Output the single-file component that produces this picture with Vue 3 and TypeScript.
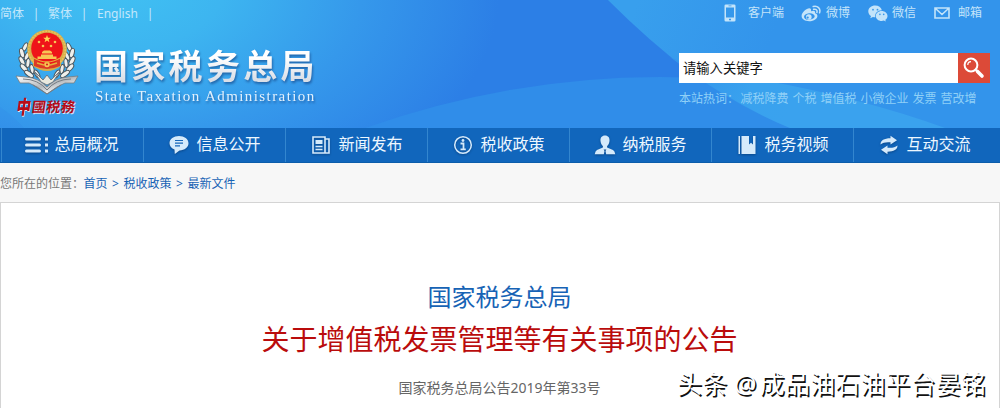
<script setup lang="ts">
interface NavItem { label: string; icon: string }

const languages: string[] = ['简体', '繁体', 'English']
const hotWords: string[] = ['减税降费', '个税', '增值税', '小微企业', '发票', '营改增']
const navItems: NavItem[] = [
  { label: '总局概况', icon: 'list' },
  { label: '信息公开', icon: 'chat' },
  { label: '新闻发布', icon: 'news' },
  { label: '税收政策', icon: 'info' },
  { label: '纳税服务', icon: 'user' },
  { label: '税务视频', icon: 'book' },
  { label: '互动交流', icon: 'swap' },
]
const crumbs: string[] = ['首页', '税收政策', '最新文件']
</script>

<template>
  <div class="page">
    <header class="header">
      <svg class="backdrop" width="1000" height="128" viewBox="0 0 1000 128" preserveAspectRatio="none">
        <defs>
          <radialGradient id="sky" gradientUnits="userSpaceOnUse" cx="0" cy="0" r="1" gradientTransform="translate(110 -25) rotate(4) scale(390 245)">
            <stop offset="0" stop-color="#41c3f3" />
            <stop offset="0.3" stop-color="#3db5f0" />
            <stop offset="0.65" stop-color="#3598eb" />
            <stop offset="1" stop-color="#2c7fe6" />
          </radialGradient>
          <linearGradient id="topRight" gradientUnits="userSpaceOnUse" x1="630" y1="20" x2="760" y2="70">
            <stop offset="0" stop-color="#389fed" />
            <stop offset="1" stop-color="#3394eb" />
          </linearGradient>
          <linearGradient id="band" gradientUnits="userSpaceOnUse" x1="690" y1="60" x2="790" y2="110">
            <stop offset="0" stop-color="#3394eb" />
            <stop offset="0.6" stop-color="#39a2ee" />
            <stop offset="1" stop-color="#3aa2ee" />
          </linearGradient>
        </defs>
        <rect width="1000" height="128" fill="url(#sky)" />
        <path d="M0 107Q12 115 24 128H0Z" fill="#2c7fe6" fill-opacity="0.15" />
        <path d="M365 128Q510 77 660 77Q810 77 960 128Z" fill="#308de9" />
        <path d="M608 0Q650 42 690 72Q740 108 790 128H1000V0Z" fill="url(#topRight)" />
        <path d="M670 57Q730 103 790 128H945Q840 90 700 70Z" fill="url(#band)" />
      </svg>

      <div class="brand-side">
        <div class="languages">
          <template v-for="lang in languages" :key="lang"><a>{{ lang }}</a><i>|</i></template>
        </div>
        <div class="brand">
          <div class="emblem">
            <svg width="64" height="66" viewBox="0 0 64 66">
              <defs>
                <linearGradient id="silver" x1="0" x2="1" y1="0" y2="1">
                  <stop offset="0" stop-color="#fff" />
                  <stop offset="0.5" stop-color="#b5b9bd" />
                  <stop offset="0.75" stop-color="#f2f3f3" />
                  <stop offset="1" stop-color="#777d84" />
                </linearGradient>
              </defs>
              <g fill="#eff0ec" stroke="#4d565c" stroke-width="1">
                <g v-for="side in [1, -1]" :key="side" :transform="side === 1 ? undefined : 'translate(64 0) scale(-1 1)'">
                  <ellipse cx="10" cy="18" rx="2" ry="4.5" transform="rotate(25 10 18)" />
                  <ellipse cx="7" cy="24" rx="2.200" ry="4.800" transform="rotate(-15 7 24)" />
                  <ellipse cx="12" cy="27" rx="2" ry="4.500" transform="rotate(25 12 27)" />
                  <ellipse cx="7" cy="32" rx="2.200" ry="4.800" transform="rotate(-28 7 32)" />
                  <ellipse cx="13" cy="34" rx="2" ry="4.500" transform="rotate(8 13 34)" />
                  <ellipse cx="9" cy="39" rx="2.200" ry="5" transform="rotate(-42 9 39)" />
                  <ellipse cx="17" cy="40" rx="2" ry="4.500" transform="rotate(-12 17 40)" />
                  <ellipse cx="14" cy="45" rx="2.200" ry="5.200" transform="rotate(-55 14 45)" />
                  <ellipse cx="22" cy="45" rx="2" ry="4.500" transform="rotate(-30 22 45)" />
                </g>
              </g>
              <path d="M1 47L11 48Q24 49 32 58Q40 49 53 48L63 47L59 54L50 54Q42 57 32 65Q22 57 14 54L5 54Z" fill="url(#silver)" stroke="#777b7f" stroke-width="0.8" />
              <path d="M8 50Q23 50 32 61Q41 50 56 50M18 56L32 65L46 56" fill="none" stroke="#777d83" stroke-width="1" />
              <path d="M19 42L28 51L32 46L36 51L45 42L38 53L32 56L26 53Z" fill="#e9e9df" stroke="#67717a" stroke-width="0.9" />
              <path d="M18 30H46V37Q39 42 32 42Q25 42 18 37Z" fill="#d9ab45" />
              <circle cx="32" cy="20.500" r="19.800" fill="#d9b04b" />
              <circle cx="32" cy="20.500" r="18.300" fill="none" stroke="#e8c562" stroke-width="1.400" stroke-dasharray="1.7 1.3" />
              <path d="M19 28H45V37Q38 40 32 40Q26 40 19 37Z" fill="#dc3a25" />
              <circle cx="32" cy="19.500" r="15.800" fill="#ef1419" />
              <path d="M32 6l1 2.7 2.8.1-2.2 1.7.8 2.7-2.4-1.6-2.4 1.6.8-2.700-2.200-1.700 2.800-.1Z" fill="#ffd955" />
              <g fill="#f8c654">
                <circle cx="24" cy="13" r="1.300" /><circle cx="40" cy="13" r="1.300" />
                <circle cx="28" cy="17" r="1.300" /><circle cx="36" cy="17" r="1.300" />
                <path d="M27 23l2-1.400h6l2 1.400v1.500H27ZM26 25.500h12v2h3.500v2.500H22.500v-2.500H26Z" />
                <circle cx="32" cy="35.500" r="2.800" />
              </g>
              <path d="M19 29Q32 37 45 29M22 34L29 36M42 34L35 36" fill="none" stroke="#e4b03c" stroke-width="1.400" />
              <circle cx="32" cy="35.500" r="1.100" fill="#d92720" />
            </svg>
            <div class="script-name"><b>中</b><span>國</span><span>税</span><span>務</span></div>
          </div>
          <div class="names">
            <div class="name-cn">国家税务总局</div>
            <div class="name-en">State Taxation Administration</div>
          </div>
        </div>
      </div>

      <div class="tools">
        <div class="services">
          <a class="client">
            <svg width="12" height="18" viewBox="0 0 12 18"><path fill-rule="evenodd" d="M1.8.5h8.4q1.3 0 1.3 1.3v14.4q0 1.3-1.3 1.3H1.8Q.5 17.500.5 16.200V1.800Q.5.5 1.800.5ZM2 3.500v10h8v-10ZM4.500 1.500v.8h3v-.8ZM5 14.800v1.500h2v-1.500Z" fill="#c3e4fa" /></svg>
            客户端
          </a>
          <a class="weibo">
            <svg width="20" height="17" viewBox="0 0 20 17">
              <path fill-rule="evenodd" d="M8.300 3.300C5.500 3.300.6 7.400.6 11c0 3.200 3.600 5.200 7.600 5.200 5 0 8.200-2.800 8.200-5.300 0-1.700-1.400-2.400-2.400-2.700.8-2.500-1.300-3.200-4-1.900.4-1.600 0-3-1.700-3ZM8 8.200c3.200-.3 5.700 1.100 5.700 3.100 0 1.800-2.400 3.300-5.300 3.500-3 .2-5.400-1.100-5.400-3.100 0-1.700 2.200-3.300 5-3.500Z" fill="#c3e4fa" />
              <path fill-rule="evenodd" d="M7.800 9.200a2.800 2.800 0 1 0 .1 5.600 2.800 2.800 0 0 0-.1-5.600ZM6.700 11.500a1.100 1.100 0 1 1 0 2.200 1.100 1.100 0 0 1 0-2.200Z" fill="#c3e4fa" />
              <path d="M12.200 1.500c4.300-1.300 7.800 2.200 6.400 6.300M12.600 4.300c2.300-.6 4 .9 3.300 3.100" fill="none" stroke="#c3e4fa" stroke-width="1.500" stroke-linecap="round" />
            </svg>
            微博
          </a>
          <a class="wechat">
            <svg width="20" height="17" viewBox="0 0 20 17">
              <path d="M7.200.5C3.300.5.300 3.100.300 6.400c0 1.900 1 3.500 2.700 4.600l-.7 2.200 2.600-1.300c.9.200 1.600.3 2.400.3-.8-3.900 2.400-7 6.600-6.900C13.200 2.500 10.500.5 7.200.5Z" fill="#c3e4fa" />
              <path d="M13.700 5.900c3.200 0 5.800 2.200 5.800 5 0 1.600-.9 3-2.200 3.900l.5 1.800-2-1c-.7.200-1.400.3-2.100.3-3.300 0-5.900-2.200-5.900-5s2.600-5 5.900-5Z" fill="#c3e4fa" />
              <g fill="#3998e9"><circle cx="5" cy="4.700" r=".9" /><circle cx="9.500" cy="4.700" r=".9" /><circle cx="11.900" cy="9.400" r=".8" /><circle cx="15.700" cy="9.400" r=".8" /></g>
            </svg>
            微信
          </a>
          <a class="mail">
            <svg width="16" height="12" viewBox="0 0 16 12"><path d="M1 1h14v10H1ZM1.500 1.500L8 7.500L14.500 1.500" fill="none" stroke="#c3e4fa" stroke-width="1.600" /></svg>
            邮箱
          </a>
        </div>
        <div class="search">
          <div class="field">请输入关键字</div>
          <button type="button" aria-label="搜索">
            <svg width="22" height="22" viewBox="0 0 22 22"><circle cx="8" cy="8" r="6.400" fill="none" stroke="#fff" stroke-width="2" /><path d="M4.800 8Q4.800 4.900 8 4.700" fill="none" stroke="#fff" stroke-width="1.200" /><path d="M12.700 12.700L14.500 14.500" stroke="#fff" stroke-width="2" /><path d="M14.500 14.500L19 19" stroke="#fff" stroke-width="3.600" stroke-linecap="round" /></svg>
          </button>
        </div>
        <div class="hot"><span class="hot-label">本站热词：</span><a v-for="word in hotWords" :key="word">{{ word }}</a></div>
      </div>
    </header>

    <nav class="nav">
      <a v-for="item in navItems" :key="item.label">
        <span class="nav-icon">
          <svg v-if="item.icon === 'list'" width="26" height="20" viewBox="0 0 26 20"><path d="M2.500 4H15.500M2.500 10H15.500M2.500 16H15.500" stroke="#d5eafb" stroke-width="3" stroke-linecap="round" /><path d="M21 2.500h3v3h-3ZM21 8.500h3v3h-3ZM21 14.500h3v3h-3Z" fill="#d5eafb" /></svg>
          <svg v-else-if="item.icon === 'chat'" width="20" height="20" viewBox="0 0 20 20"><path d="M10 1C4.700 1 .5 4 .5 8.200c0 3 2 5.200 5 6.300L5.800 19l4.700-3.600c5.100-.1 9-3.200 9-7.200C19.500 4 15.300 1 10 1Z" fill="#d5eafb" /><path d="M6 5.500h8M6 8.200h8M6 10.900h5" stroke="#1767ba" stroke-width="1.200" /></svg>
          <svg v-else-if="item.icon === 'news'" width="20" height="20" viewBox="0 0 20 20"><path d="M14 18H2V2H14ZM14 4H18V18H14M4.500 11.500H11.500M4.500 14.500H11.500" fill="none" stroke="#d5eafb" stroke-width="1.600" /><path d="M4.500 5H11.500V9H4.500Z" fill="#d5eafb" /></svg>
          <svg v-else-if="item.icon === 'info'" width="20" height="20" viewBox="0 0 20 20"><circle cx="10" cy="10" r="8.300" fill="none" stroke="#d5eafb" stroke-width="1.500" /><circle cx="10" cy="5.500" r="1.400" fill="#d5eafb" /><path d="M7.500 8.500H10.500V14M7.500 14.300H12.800" fill="none" stroke="#d5eafb" stroke-width="1.800" /></svg>
          <svg v-else-if="item.icon === 'user'" width="22" height="20" viewBox="0 0 22 20"><path d="M11 .5C7.800.5 6.200 2.800 6.500 6c.2 2.300 1.200 4 2.400 5.100v1.500L3 15Q1.300 15.700.7 19.300H9.800L10.500 16 9.600 14.600H12.400L11.500 16 12.200 19.300H21.300Q20.700 15.700 19 15l-5.900-2.400v-1.500C14.300 10 15.300 8.300 15.500 6 15.800 2.800 14.200.5 11 .5Z" fill="#d5eafb" /></svg>
          <svg v-else-if="item.icon === 'book'" width="20" height="20" viewBox="0 0 20 20"><path d="M1.500 1H3V19H1.500ZM4.500 1H12V9.500L14 7.700 16 9.500V1H18.500V19H4.500Z" fill="#d5eafb" /></svg>
          <svg v-else width="20" height="20" viewBox="0 0 20 20"><path d="M1.500 9.500C1.500 5.500 5 3.300 11.500 3.300V.8L18 5.300 11.500 9.600V7.300C7 6.900 4 7.500 1.500 9.500ZM18.500 10.500C18.500 14.500 15 16.700 8.500 16.700V19.200L2 14.700 8.500 10.400V12.700C13 13.100 16 12.500 18.500 10.500Z" fill="#d5eafb" /></svg>
        </span>
        <span class="nav-label">{{ item.label }}</span>
      </a>
    </nav>

    <div class="crumbs">
      <span>您所在的位置：</span>
      <template v-for="(crumb, i) in crumbs" :key="crumb"><i v-if="i > 0">&gt;</i><a>{{ crumb }}</a></template>
    </div>

    <main class="article">
      <h2>国家税务总局</h2>
      <h1>关于增值税发票管理等有关事项的公告</h1>
      <p>国家税务总局公告2019年第33号</p>
    </main>
    <div class="watermark">头条 <span>@</span>成品油石油平台晏铭</div>
  </div>
</template>

<style>
body { margin: 0; overflow: hidden; }
</style>

<style scoped>
* { box-sizing: border-box; }
.page {
  position: relative;
  width: 1000px;
  height: 408px;
  overflow: hidden;
  display: flex;
  flex-direction: column;
  background: #f7f7f7;
  font-family: "Noto Sans", "Noto Sans CJK SC", sans-serif;
  font-size: 12px;
}
i { font-style: normal; }
svg { display: block; flex: none; }
.header { position: relative; display: flex; justify-content: space-between; height: 128px; flex: none; }
.backdrop { position: absolute; inset: 0; }
.brand-side, .tools { position: relative; }
.languages { display: flex; height: 26px; line-height: 27px; color: #c3e7fb; white-space: nowrap; }
.languages i { width: 24px; text-align: center; }
.languages a:last-of-type { width: 42px; padding-left: 1px; }
.brand { display: flex; padding-left: 15px; }
.emblem { width: 80px; padding-top: 3px; }
.script-name {
  display: flex;
  align-items: center;
  height: 24px;
  margin-top: -1px;
  padding-left: 4px;
  color: #b70d19;
  font-family: "Noto Sans CJK SC", sans-serif;
  font-weight: 700;
  font-size: 14px;
  line-height: 24px;
  text-shadow: 1px 1px 0 #d8e3ef;
  transform: skewX(-8deg);
}
.script-name b { font-size: 19px; width: 15px; margin-left: -4px; margin-right: 2px; transform: scaleX(0.75); }
.script-name span { width: 14.500px; }
.names { padding-top: 19px; white-space: nowrap; filter: drop-shadow(1px 2px 1px rgba(20, 65, 130, 0.6)); }
.name-cn {
  height: 41px;
  line-height: 40px;
  font-family: "Noto Sans CJK SC", sans-serif;
  font-size: 34px;
  font-weight: 700;
  letter-spacing: 3.300px;
  margin-left: -1px;
  color: transparent;
  background: linear-gradient(#fff 30%, #dadfe7 85%);
  background-clip: text;
}
.name-en {
  height: 20px;
  line-height: 20px;
  font-family: "Liberation Serif", serif;
  font-size: 15px;
  letter-spacing: 1.420px;
  color: #e2f1fd;
}
.tools { width: 321px; }
.services { display: flex; height: 26px; line-height: 28px; color: #c3e4fa; }
.services a { display: flex; align-items: center; white-space: nowrap; }
.client { padding-left: 45px; gap: 12px; }
.weibo { margin-left: 17px; gap: 5px; }
.wechat { margin-left: 18px; gap: 4px; }
.mail { margin-left: 18px; gap: 8px; }
.search { display: flex; height: 30px; margin-top: 27px; width: 311px; }
.field { width: 279px; padding-left: 4px; background: #fff; color: #111; font-size: 13.300px; line-height: 30px; }
.search button { display: flex; align-items: center; justify-content: center; flex: 1; padding: 0; border: 0; background: #dc4a38; }
.hot { display: flex; gap: 4px; margin-top: 6px; line-height: 20px; color: #8fd0f7; white-space: nowrap; }
.hot-label { width: 57.500px; }
.nav { display: flex; flex: none; height: 35px; padding-left: 1px; background: #1166bc; border-bottom: 1px solid #0c5dab; }
.nav a {
  display: flex;
  align-items: center;
  flex: none;
  width: 142px;
  padding-left: 19.500px;
  border-left: 1px solid #3386cf;
  color: #edf7ff;
  font-size: 16px;
  line-height: 32px;
  white-space: nowrap;
}
.nav-icon { display: flex; justify-content: center; width: 30px; margin-right: 3px; filter: drop-shadow(0 1px 1px rgba(0, 35, 80, 0.45)); }
.nav-label { padding-bottom: 2px; }
.crumbs { display: flex; flex: none; height: 39px; line-height: 41px; color: #777; white-space: nowrap; }
.crumbs span { width: 83.500px; }
.crumbs a, .crumbs i { color: #1763b5; }
.crumbs i { width: 16px; text-align: center; }
.article { flex: 1; padding-top: 76px; padding-right: 1px; border: 1px solid #d4d4d4; border-bottom: 0; background: #fff; text-align: center; }
.article h2 { margin: 0; height: 36px; line-height: 36px; font-size: 24px; font-weight: 400; color: #1763b5; }
.article h1 { margin: 0; height: 48px; line-height: 48px; font-size: 28px; font-weight: 400; color: #ba0c0c; }
.article p { margin: 11px 0 0; line-height: 28px; font-size: 14px; color: #666; }
.watermark {
  position: absolute;
  left: 677px;
  top: 366px;
  line-height: 34px;
  font-size: 25px;
  letter-spacing: 0.150px;
  color: #fff;
  text-shadow: 1.500px 1.500px 0 #111;
  white-space: nowrap;
}
.watermark span { margin-right: 3px; }
</style>
